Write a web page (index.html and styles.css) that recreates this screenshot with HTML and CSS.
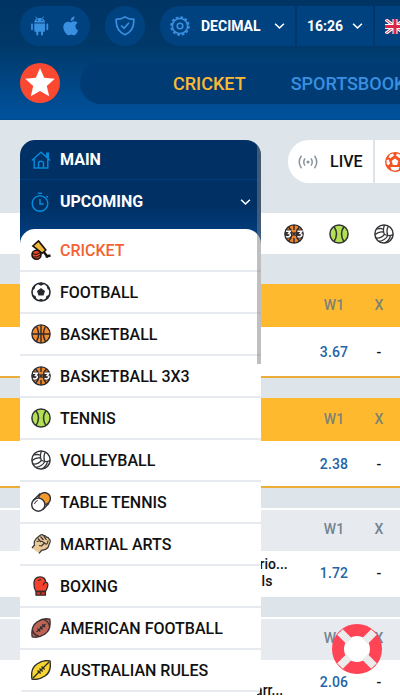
FILE: index.html
```
<!DOCTYPE html>
<html lang="en">
<head>
<meta charset="utf-8">
<title>Cricket betting</title>
<link rel="stylesheet" href="styles.css">
</head>
<body>
<svg class="defs" width="0" height="0">
  <defs>
    <symbol id="basket" viewBox="0 0 20 20"><circle cx="10" cy="10" r="9.1" fill="#f08a2c"/><g fill="none" stroke="#2b292c" stroke-width="1.4"><circle cx="10" cy="10" r="9.1"/><path d="M10 1v18M1 10h18M5.500 2.500q4.300 7.500 0 15M14.500 2.500q-4.300 7.500 0 15"/></g></symbol>
    <symbol id="basket3" viewBox="0 0 20 20"><circle cx="10" cy="10" r="9.100" fill="#ef862c"/><g fill="none" stroke="#2b292c" stroke-width="1.400"><path d="M10 1v5M10 14v5M4.500 3l2.500 3M15.500 3L13 6M4.500 17L7 14M15.500 17L13 14"/><circle cx="10" cy="10" r="9.100"/></g><path d="M1.200 5.600h6.300L8.700 10l-1.200 4.600H1.800Q0 10 1.200 5.600zM18.800 5.600h-6.300L11.300 10l1.200 4.600h5.700Q20 10 18.800 5.600z" fill="#302d30"/><path d="M2 7.200h4.300L4.600 9.500Q6.700 9.700 6.300 11.400 5 13.700 2 12.500M13.500 7.200h4.300l-1.700 2.300q2.100.2 1.700 1.900-1.300 2.300-4.300 1.100" fill="none" stroke="#fff" stroke-width="1.500"/><path d="M8.600 8l2.800 4M11.400 8l-2.800 4" stroke="#302d30" stroke-width="1.200"/></symbol>
    <symbol id="tennis" viewBox="0 0 20 20"><circle cx="10" cy="10" r="9.100" fill="#b3e052"/><g fill="none" stroke="#303335" stroke-width="1.500"><circle cx="10" cy="10" r="9.100"/><path d="M5 2.500q5 7.500 0 15M15 2.500q-5 7.500 0 15"/></g></symbol>
    <symbol id="volley" viewBox="0 0 20 20"><circle cx="10" cy="10" r="9.100" fill="#fff" stroke="#343539" stroke-width="1.500"/><g fill="none" stroke="#343539" stroke-width="1.300"><path d="M10.300 10.300Q8.500 6 10.500 1M13.600 11Q12 6 14.500 2.200M10.300 10.300Q15 13 18.900 10.500M10.300 10.300Q7.500 14.500 2 14M13.500 12Q11 16.500 5 17.300M16.500 12Q15 17 10.500 19M9.300 8Q5 7 1.200 10.500M9 5Q6 4 3 5"/></g></symbol>
    <symbol id="chev" viewBox="0 0 12 8"><path d="M1.200 1.500L6 6.200l4.800-4.700" fill="none" stroke="currentColor" stroke-width="1.700"/></symbol>
    <symbol id="soccer" viewBox="0 0 20 20"><circle cx="10" cy="10" r="9" fill="#fff" stroke="currentColor" stroke-width="1.600"/><path d="M10 6l4 2.900-1.500 4.600h-5L6 8.900zM6.500 2L10 3.700 13.500 2 10 .5zM1 8l2.400-.8L4.500 3.500 2 5zM19 8l-2.400-.8-1.100-3.700L18 5zM2 13l2.600 1 .9 4-3-2zM18 13l-2.600 1-.9 4 3-2zM7.500 18l2.500-1.200 2.500 1.200-2.500 1z" fill="currentColor"/></symbol>
  </defs>
</svg>

<header class="header">
  <div class="tools">
    <div class="pill apps">
      <svg width="20" height="20" viewBox="0 0 20 20"><path d="M4.300 6.400Q4.500 1.900 9.600 1.900t5.400 4.500zM4.300 7.500H15v7.300q0 1-1 1h-1v2.700q0 1-1 1t-1-1v-2.700H8.300v2.700q0 1-1 1t-1-1v-2.700h-1q-1 0-1-1z" fill="currentColor"/><path d="M5.700.6l1.200 2M13.500.6l-1.200 2" stroke="currentColor"/><path d="M2 8.300v5M17.300 8.300v5" stroke="currentColor" stroke-width="1.800" stroke-linecap="round"/><circle cx="7.300" cy="4.300" r=".8" fill="#00407b"/><circle cx="12" cy="4.300" r=".8" fill="#00407b"/></svg>
      <svg width="18" height="20" viewBox="0 0 18 20"><path d="M12.500.3Q12.700 4.500 8.700 5 8.500 1.300 12.500.3zM9 6.300q3.500-2.200 6.600.5-2.500 1.500-2.200 4 .3 2.500 2.600 3.400-1.500 4.300-3.700 5-1.300.2-2.900-.6-1.600.8-3 .6Q4 18.700 2 14.500.2 9.500 2.900 6.900 5.500 4.800 9 6.300z" fill="currentColor"/></svg>
    </div>
    <div class="pill shield">
      <svg width="20" height="20" viewBox="0 0 20 20" fill="none" stroke="currentColor" stroke-width="1.700"><path d="M10 .9q3.500 2.500 8.800 2.500.6 11.500-8.800 15.300Q.6 14.900 1.200 3.400 6.500 3.400 10 .9z"/><path d="M6 9.500l3 2.800 5-5.500"/></svg>
    </div>
    <div class="selects">
      <div class="pick odds">
        <svg width="20" height="20" viewBox="0 0 20 20" fill="none" stroke="currentColor"><circle cx="10" cy="10" r="7.600" stroke-width="1.500"/><circle cx="10" cy="10" r="8.900" stroke-width="1.700" stroke-dasharray="2.800 1.860"/><circle cx="10" cy="10" r="2.800" stroke-width="1.600"/></svg>
        <span>DECIMAL</span><svg class="chev" width="11" height="8"><use href="#chev"/></svg>
      </div>
      <div class="pick clock"><span>16:26</span><svg class="chev" width="11" height="8"><use href="#chev"/></svg></div>
      <div class="pick lang">
        <svg width="20" height="15" viewBox="0 0 20 15"><path fill="#213b7c" d="M0 0h20v15H0z"/><path d="M0 0l20 15M20 0L0 15" stroke="#fff" stroke-width="3.200"/><path d="M0 0l20 15M20 0L0 15" stroke="#d92847" stroke-width="1"/><path d="M10 0v15M0 7.500h20" stroke="#fff" stroke-width="5"/><path d="M10 0v15M0 7.500h20" stroke="#d92847" stroke-width="3"/></svg>
      </div>
    </div>
  </div>
  <div class="mainnav">
    <svg class="logo" width="40" height="40" viewBox="0 0 40 40"><circle cx="20" cy="20" r="20" fill="#fb4830"/><path d="M20 5l4.200 9.800 10.600 1-8 7.100 2.400 10.400L20 27.900l-9.200 5.400 2.400-10.400-8-7.100 10.600-1z" fill="#fff"/></svg>
    <nav class="tabs"><a class="on">CRICKET</a><a>SPORTSBOOK</a></nav>
  </div>
</header>

<main class="content">
  <div class="modes">
    <div class="mode live">
      <svg width="20" height="14" viewBox="0 0 20 14" fill="none" stroke="#8c949c" stroke-width="1.500"><circle cx="10" cy="7" r="1.600" fill="#8c949c" stroke="none"/><path d="M7 3.300q-2.500 3.700 0 7.400M13 3.300q2.500 3.700 0 7.400M3.500.8q-4.500 6.200 0 12.400M16.500.8q4.500 6.200 0 12.400"/></svg>
      <span>LIVE</span>
    </div>
    <div class="mode sports"><svg width="20" height="20" viewBox="0 0 20 20"><circle cx="10" cy="10" r="10" fill="#f45424"/><path d="M10 6.500l3.400 2.500-1.300 4H7.900L6.600 9z" fill="#fff"/><path d="M5 2.500l3-1 1 2-3.500 2.700-2-.7zM15 2.500l-3-1-1 2 3.500 2.700 2-.7zM1.600 8l2.200-.5 1.300 4-2 2-1.500-2zM18.400 8l-2.200-.5-1.300 4 2 2 1.500-2zM5.500 15l4 0 1 0 4 0-1 2.700-3.500 1-3.500-1z" fill="#fff"/></svg></div>
  </div>
  <div class="strip">
    <svg width="20" height="20"><use href="#basket3"/></svg>
    <svg width="20" height="20"><use href="#tennis"/></svg>
    <svg width="20" height="20"><use href="#volley"/></svg>
  </div>
  <section class="league top first"><div class="cols"><span>W1</span><span>X</span></div><div class="match"><b>3.67</b><i>-</i></div></section>
  <section class="league top second"><div class="cols"><span>W1</span><span>X</span></div><div class="match"><b>2.38</b><i>-</i></div></section>
  <section class="league"><div class="cols"><span>W1</span><span>X</span></div><div class="match"><p>Warrio...<br>Finals</p><b>1.72</b><i>-</i></div></section>
  <section class="league"><div class="cols"><span>W1</span><span>X</span></div><div class="match"><p class="low">Warr...</p><b>2.06</b><i>-</i></div></section>
</main>

<aside class="sidebar">
  <div class="group"><svg width="20" height="20" viewBox="0 0 20 20" fill="none" stroke="#0788d8" stroke-width="1.500"><path d="M.8 10.500L10 2.200l9.200 8.300M3.200 9v9h13.600V9M15.800 7V3.200h1.500v5M7.500 18v-5q0-1.800 2.500-1.800t2.500 1.800v5"/></svg><span>MAIN</span></div>
  <div class="group upcoming"><svg width="20" height="20" viewBox="0 0 20 20" fill="none" stroke="#0788d8" stroke-width="1.500"><circle cx="9" cy="11.500" r="7.800"/><path d="M9 7v5h3.800M7 1.200h4M15.500 4L17 5.500"/></svg><span>UPCOMING</span><svg class="chev" width="11" height="8"><use href="#chev"/></svg></div>
  <ul class="sportlist">
    <li class="active"><svg width="20" height="20" viewBox="0 0 20 20"><path d="M12.500 11.500l4.500 6M14.500 16.500l5-1" stroke="#16120f" stroke-width="2.400"/><path d="M1.800 6L7.500.9 14.800 10l-3.600 3.300z" fill="#f3b73d" stroke="#16120f" stroke-width="1.600"/><circle cx="5.500" cy="14.700" r="4.500" fill="#e7492c" stroke="#16120f" stroke-width="1.600"/><path d="M1 13.500q4 2.500 8.500-1M2 17q4 1 7.500-2" fill="none" stroke="#16120f"/></svg><span>CRICKET</span></li>
    <li><svg class="ink" width="20" height="20"><use href="#soccer"/></svg><span>FOOTBALL</span></li>
    <li><svg width="20" height="20"><use href="#basket"/></svg><span>BASKETBALL</span></li>
    <li><svg width="20" height="20"><use href="#basket3"/></svg><span>BASKETBALL 3X3</span></li>
    <li><svg width="20" height="20"><use href="#tennis"/></svg><span>TENNIS</span></li>
    <li><svg width="20" height="20"><use href="#volley"/></svg><span>VOLLEYBALL</span></li>
    <li><svg width="20" height="20" viewBox="0 0 20 20" stroke="#303238" stroke-width="1.400"><circle cx="13.500" cy="6.500" r="5.900" fill="#f39a2c"/><circle cx="7.300" cy="12.700" r="6.600" fill="#fff"/><path d="M2.200 8.500l7-7M11.500 17.800l6.500-6.500" fill="none"/><path d="M3.500 12q.5-2.800 3.300-3.500" fill="none" stroke-width="1"/></svg><span>TABLE TENNIS</span></li>
    <li><svg width="20" height="20" viewBox="0 0 20 20" stroke-linejoin="round"><path d="M1 14l2.500-3Q2.500 7.500 5 4.800L9.500 1q2-.8 3 .7 2-.5 3 1.400 2-.2 2.400 1.800 1.800.8 1.200 3L17 13.500q-2.500 2.800-6 2.500L8 19.300z" fill="#e9c99a"/><path d="M1 14l2.500-3Q2.500 7.500 5 4.800L9.500 1q2-.8 3 .7 2-.5 3 1.400 2-.2 2.400 1.800 1.800.8 1.200 3L17 13.500q-2.500 2.800-6 2.500L8 19.300M7 4.500l3 3.500M9.500 2.500l3 3.500M13 2.300L15.500 6M5.500 7.500q5-1.500 8 1.500t3.500-2.500M13.500 9l-3 3-2.500-.5" fill="none" stroke="#3b3633" stroke-width="1.200"/></svg><span>MARTIAL ARTS</span></li>
    <li><svg width="20" height="20" viewBox="0 0 20 20" stroke="#352c2d" stroke-width="1.300" stroke-linejoin="round"><path d="M5 15.500Q2.800 12 3 8 2.800.9 9.200.8q5.300 0 5.500 5.400 2.800.6 2 4-.6 2.800-2.200 5.300z" fill="#f6422d"/><path d="M5 15.500h9.400v3.700H5z" fill="#d23222"/><path d="M14.700 6.200q-2.300.8-2.600 3.300M7 4.500l3-1M9.800 15.500v3" fill="none"/></svg><span>BOXING</span></li>
    <li><svg width="20" height="20" viewBox="0 0 20 20" stroke="#382b2d" stroke-width="1.300"><path d="M1.200 18.800Q-.5 8.500 6 4T18.800 1.200Q20.500 11.500 14 16T1.200 18.800z" fill="#bd6457"/><path d="M12.500 1.500q5 1.500 6 6.500M1.500 12q1 5 6.500 6.200M5.500 14L14.500 6M6.500 10.500l2.700 3M9 8.500l2.500 3M11.300 6.300l2.700 3" fill="none"/></svg><span>AMERICAN FOOTBALL</span></li>
    <li><svg width="20" height="20" viewBox="0 0 20 20" stroke="#30302c" stroke-width="1.400"><path d="M1 19Q-.8 8.500 6 4T19 1Q20.800 11.500 14 16T1 19z" fill="#f8d632"/><path d="M2 18L18 2M6.500 10.500l3.200 3M8.500 8.500l3.200 3M10.500 6.500l3.200 3" fill="none"/></svg><span>AUSTRALIAN RULES</span></li>
    <li class="rest"></li>
  </ul>
  <div class="thumb"></div>
</aside>

<svg class="help" width="50" height="50" viewBox="0 0 50 50"><circle cx="25" cy="25" r="13" fill="#fff"/><circle cx="25" cy="25" r="19" fill="none" stroke="#ff4455" stroke-width="12"/><path d="M8 8l9 9M42 8l-9 9M8 42l9-9M42 42l-9-9" stroke="#ecebec" stroke-width="8"/></svg>
</body>
</html>
```
FILE: styles.css
```
* { box-sizing: border-box; }
html, body { height: 100%; }
body {
  position: relative;
  margin: 0;
  overflow: hidden;
  background: #dde4ea;
  font-family: Roboto, "Liberation Sans", sans-serif;
  font-weight: 500;
  color: #111;
}
svg { display: block; flex: none; }
.defs { position: absolute; }
.ink { color: #25282e; }

.header {
  width: 400px;
  height: 120px;
  padding: 6px 0 0 20px;
  overflow: hidden;
  background: linear-gradient(#003464 0%, #003969 38%, #00529e 100%);
  border-bottom: 1px solid #004a8e;
  color: #398fe0;
}
.tools { display: flex; gap: 15px; width: 420px; }
.pill { display: flex; align-items: center; height: 40px; border-radius: 20px; background: #00427f; }
.apps { width: 70px; padding-left: 10px; gap: 12px; }
.shield { width: 40px; justify-content: center; }
.selects { display: flex; gap: 2px; }
.pick {
  display: flex;
  align-items: center;
  height: 40px;
  background: #00427f;
  font-size: 14px;
  font-weight: 700;
}
.pick span, .pick .chev { color: #fff; }
.odds { width: 135px; padding-left: 10px; border-radius: 20px 0 0 20px; }
.odds span { width: 73px; margin-left: 11px; }
.clock { width: 76px; padding-left: 10px; }
.clock span { width: 45px; }
.lang { width: 60px; padding-left: 10px; }

.mainnav { display: flex; gap: 20px; width: 460px; margin-top: 16px; align-items: center; }
.tabs {
  display: flex;
  align-items: center;
  gap: 45px;
  width: 400px;
  height: 42px;
  padding-left: 93px;
  border-radius: 21px;
  background: #003c73;
  font-size: 18px;
}
.tabs .on { color: #fdb934; }

.content { width: 400px; height: 580px; padding-top: 20px; overflow: hidden; }
.modes { display: flex; gap: 2px; margin-left: 288px; }
.mode { display: flex; flex: none; align-items: center; height: 43px; background: #fff; }
.live { width: 85px; padding-left: 10px; gap: 12px; border-radius: 21px 0 0 21px; font-size: 16px; }
.sports { width: 60px; padding-left: 10px; }
.strip {
  display: flex;
  align-items: center;
  gap: 25px;
  height: 41px;
  margin-top: 30px;
  padding-left: 284px;
  background: #fff;
}
.league { margin-bottom: 20px; background: #fff; }
.first { margin-top: 30px; }
.cols, .match { display: flex; align-items: center; justify-content: flex-end; }
.cols { height: 41px; padding-bottom: 3px; background: #e7eaef; color: #738490; font-size: 14px; }
.match { height: 46px; padding-bottom: 2px; font-size: 14px; }
.league:not(.top) { border-top: 2px solid #fff; }
.top .cols { height: 43px; padding-bottom: 1px; background: #ffb92e; color: #7d8374; }
.top { border-bottom: 2px solid #ecae39; }
.top .match { padding-bottom: 0; }
.first .match { height: 49px; }
.second .match { height: 45px; }
.cols span, .match b { width: 56px; text-align: center; }
.cols span + span, .match i { width: 34px; margin-right: 4px; text-align: center; font-style: normal; }
.match b { color: #2564a8; font-weight: 500; letter-spacing: .2px; }
.match p { width: 70px; margin: 0 auto 0 235px; line-height: 17px; white-space: nowrap; }
.match p.low { padding: 17px 0 0 8px; }

.sidebar {
  position: absolute;
  top: 140px;
  left: 20px;
  width: 241px;
  height: 560px;
  overflow: hidden;
  border-radius: 15px;
  background: linear-gradient(#003064 0, #003064 65px, #00438a 110px) no-repeat;
  background-size: 100% 130px;
}
.group {
  display: flex;
  align-items: center;
  height: 40px;
  padding: 0 10px 0 11px;
  gap: 9px;
  border-bottom: 1px solid #003d79;
  color: #fff;
  font-size: 16px;
  font-weight: 700;
}
.upcoming { height: 43px; border: 0; }
.group .chev { margin-left: auto; }
.sportlist {
  height: 471px;
  margin: 6px 0 0;
  padding: 1px 0 0;
  list-style: none;
  overflow: hidden;
  border-radius: 15px;
  background: #fff;
}
.sportlist li {
  display: flex;
  align-items: center;
  gap: 9px;
  height: 42px;
  padding-left: 11px;
  border-bottom: 2px solid #e7ebef;
  font-size: 16px;
}
.sportlist .active { color: #f46234; }
.sportlist .rest { border: 0; }
.thumb {
  position: absolute;
  top: 0;
  right: 0;
  width: 4px;
  height: 224px;
  background: rgba(128, 128, 128, .5);
}
.help { position: absolute; left: 332px; top: 624px; }
```
